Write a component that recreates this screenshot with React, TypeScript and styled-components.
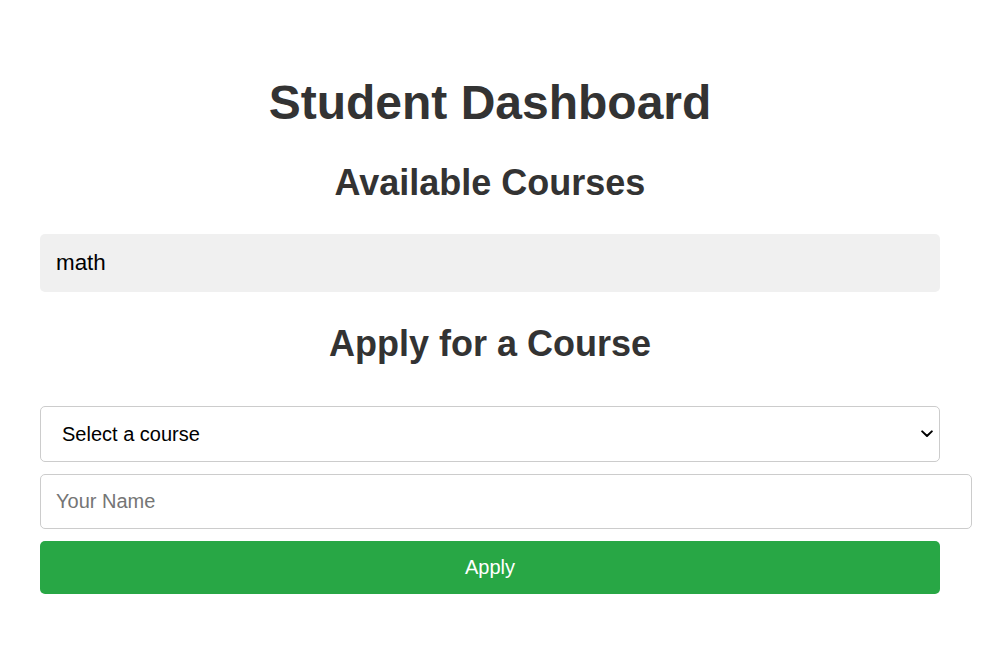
import React from "react";
import styled, { createGlobalStyle } from "styled-components";

const GlobalStyle = createGlobalStyle`
  html, body {
    margin: 0;
    padding: 0;
    background: #ffffff;
    font-family: "Liberation Sans", Arial, sans-serif;
  }
`;

const Page = styled.div`
  width: 900px;
  padding: 75px 40px 40px;
`;

const Title = styled.h1`
  margin: 0 0 32px;
  font-size: 48px;
  font-weight: bold;
  line-height: normal;
  text-align: center;
  color: #333333;
`;

const SectionTitle = styled.h2<{ $top?: number; $bottom?: number }>`
  margin: ${(p) => p.$top ?? 0}px 0 ${(p) => p.$bottom ?? 30}px;
  font-size: 36px;
  font-weight: bold;
  line-height: normal;
  text-align: center;
  color: #333333;
`;

const CourseList = styled.ul`
  list-style: none;
  margin: 0;
  padding: 0;
`;

const CourseItem = styled.li`
  background: #f0f0f0;
  border-radius: 5px;
  padding: 16px;
  font-size: 22.4px;
  line-height: normal;
  color: #000000;
`;

const Form = styled.form`
  display: flex;
  flex-direction: column;
  align-items: flex-start;
  gap: 12px;
  margin-top: 41px;
`;

const SelectWrap = styled.div`
  position: relative;
  width: 100%;
`;

const Select = styled.select`
  box-sizing: border-box;
  display: block;
  width: 100%;
  height: 56px;
  padding: 0 40px 0 21px;
  font-family: "Liberation Sans", Arial, sans-serif;
  font-size: 20px;
  color: #000000;
  background: #ffffff;
  border: 1px solid #cccccc;
  border-radius: 5px;
  appearance: none;
  -webkit-appearance: none;
  outline: none;
`;

const Chevron = styled.svg`
  position: absolute;
  right: 7px;
  top: 50%;
  width: 12px;
  height: 8px;
  margin-top: -4px;
  pointer-events: none;
`;

const TextInput = styled.input`
  box-sizing: content-box;
  width: 100%;
  padding: 15px;
  font-family: "Liberation Sans", Arial, sans-serif;
  font-size: 20px;
  line-height: normal;
  color: #000000;
  background: #ffffff;
  border: 1px solid #cccccc;
  border-radius: 5px;
  outline: none;

  &::placeholder {
    color: #757575;
  }
`;

const ApplyButton = styled.button`
  box-sizing: border-box;
  width: 100%;
  padding: 15px;
  font-family: "Liberation Sans", Arial, sans-serif;
  font-size: 20px;
  line-height: normal;
  color: #ffffff;
  background: #28a745;
  border: none;
  border-radius: 5px;
  cursor: pointer;
`;

export default function App() {
  return (
    <>
      <GlobalStyle />
      <Page>
        <Title>Student Dashboard</Title>
        <SectionTitle>Available Courses</SectionTitle>
        <CourseList>
          <CourseItem>math</CourseItem>
        </CourseList>
        <SectionTitle $top={31} $bottom={0}>
          Apply for a Course
        </SectionTitle>
        <Form onSubmit={(e) => e.preventDefault()}>
          <SelectWrap>
            <Select defaultValue="">
              <option value="">Select a course</option>
              <option value="math">math</option>
            </Select>
            <Chevron viewBox="0 0 12 8" aria-hidden="true">
              <path
                d="M1.2 1.4 L6 6 L10.8 1.4"
                fill="none"
                stroke="#000000"
                strokeWidth="2"
                strokeLinecap="round"
                strokeLinejoin="round"
              />
            </Chevron>
          </SelectWrap>
          <TextInput type="text" placeholder="Your Name" />
          <ApplyButton type="submit">Apply</ApplyButton>
        </Form>
      </Page>
    </>
  );
}
